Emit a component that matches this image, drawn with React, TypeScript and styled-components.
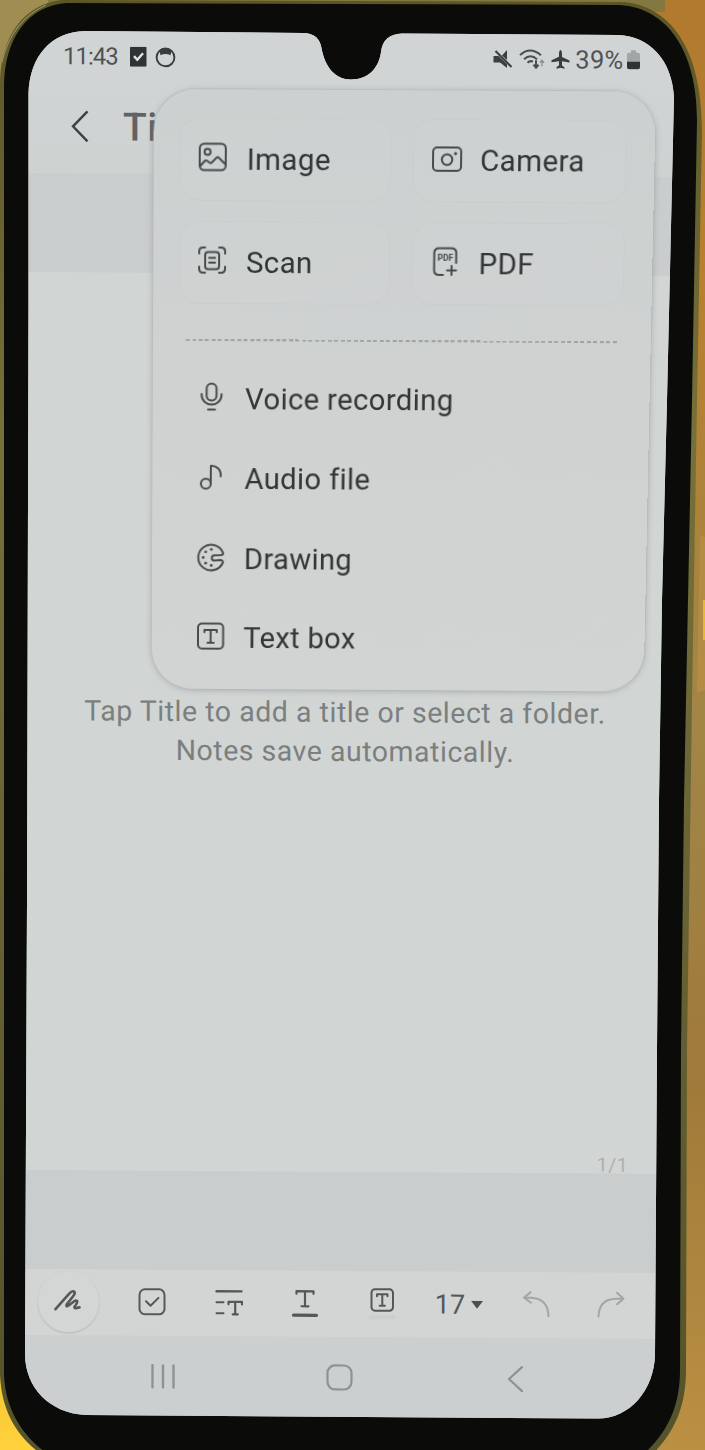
import React from "react";
import styled, { createGlobalStyle } from "styled-components";

const Global = createGlobalStyle`
  * { box-sizing: border-box; }
  body { margin: 0; background: #a5803c; font-family: Roboto, "Liberation Sans", sans-serif; }
`;

type Pt = [number, number];

/* Perspective matrix that carries a w × h box onto the four given corners (tl, tr, br, bl). */
function perspective(w: number, h: number, [p0, p1, p2, p3]: Pt[]) {
  const dx1 = p1[0] - p2[0];
  const dx2 = p3[0] - p2[0];
  const sx = p0[0] - p1[0] + p2[0] - p3[0];
  const dy1 = p1[1] - p2[1];
  const dy2 = p3[1] - p2[1];
  const sy = p0[1] - p1[1] + p2[1] - p3[1];
  const det = dx1 * dy2 - dx2 * dy1;
  const g = (sx * dy2 - dx2 * sy) / det;
  const k = (dx1 * sy - sx * dy1) / det;
  const a = p1[0] - p0[0] + g * p1[0];
  const b = p3[0] - p0[0] + k * p3[0];
  const d = p1[1] - p0[1] + g * p1[1];
  const e = p3[1] - p0[1] + k * p3[1];
  const m = [a / w, d / w, 0, g / w, b / h, e / h, 0, k / h, 0, 0, 1, 0, p0[0], p0[1], 0, 1];
  return `matrix3d(${m.map((n) => n.toFixed(8)).join(",")})`;
}

const Stage = styled.main`
  position: relative;
  width: 705px;
  height: 1450px;
  overflow: hidden;
`;

const DeviceArt = styled.svg`
  position: absolute;
  inset: 0;
`;

const Screen = styled.div`
  position: relative;
  width: 705px;
  height: 1450px;
  padding-left: 24px;
  background: #ced2d1;
  clip-path: path("M85 31 L303 33 C315 33.3 320 39 321.5 48 C325 67 335 79.5 351 79.5 C369 79.5 379 67 381 52 C382.5 40 389 34 402 33.5 L618 35 C650 36.5 672 60 674 97 L667 400 L662 600 L659 800 L657 1050 L655 1355 C654 1390 630 1418.5 598 1418.5 L85 1415 C50 1413 25.5 1388 25 1355 L27 900 L28.5 300 L28.5 93 C30 57 50 32 85 31 Z");
`;

const Column = styled.div`
  width: 656px;
  display: flex;
  flex-direction: column;
  transform: skewY(0.36deg);
  transform-origin: 0 0;
`;

const StatusBar = styled.div`
  height: 80px;
  padding: 32px 40px 0 39px;
  display: flex;
  justify-content: space-between;
  align-items: center;
  background: #d0d4d5;
  color: #505354;
  font-size: 24px;
`;

const StatusGroup = styled.div<{ $gap: number }>`
  display: flex;
  align-items: center;
  gap: ${(p) => p.$gap}px;
  height: 28px;
`;

const Clock = styled.span`
  letter-spacing: -1px;
  margin-right: 4px;
`;

const Percent = styled.span`
  font-size: 25.5px;
  letter-spacing: 0.3px;
  margin-right: -2px;
`;

const Header = styled.header`
  height: 93px;
  padding: 0 0 0 45px;
  display: flex;
  align-items: center;
  gap: 34px;
  background: linear-gradient(#d0d4d5, #ced2d1);
`;

const Title = styled.h1`
  margin: 0;
  font-size: 39px;
  font-weight: 500;
  letter-spacing: 0.6px;
  color: #606264;
`;

const Band = styled.div<{ $h: number }>`
  height: ${(p) => p.$h}px;
  background: #cacdcd;
`;

const Page = styled.section`
  height: 898px;
  padding: 419px 29px 0 0;
  display: flex;
  flex-direction: column;
  background: #d1d5d4;
`;

const Hint = styled.p`
  margin: 0 0 0 14px;
  width: 614px;
  font-size: 28.5px;
  line-height: 39px;
  letter-spacing: 0.52px;
  text-align: center;
  white-space: pre-line;
  color: #7c7f7f;
`;

const PageCount = styled.span`
  margin: auto 23px -4px auto;
  font-size: 19.5px;
  line-height: 24px;
  letter-spacing: 0.4px;
  color: #adb0b0;
`;

const Toolbar = styled.nav`
  height: 66px;
  display: grid;
  grid-template-columns: 88px 80px 74px 78px 76px 78px 76px 74px;
  align-items: center;
  justify-items: center;
  padding-bottom: 2px;
  background: #d2d5d4;
  color: #555858;
`;

const PenButton = styled.div`
  width: 61px;
  height: 61px;
  border-radius: 50%;
  display: grid;
  place-items: center;
  background: #d4d6d6;
  box-shadow: 0 1px 2px rgba(110, 115, 115, 0.3);
`;

const FontSize = styled.div`
  display: flex;
  align-items: center;
  gap: 6px;
  font-size: 27px;
  padding-top: 2px;
`;

const SystemNav = styled.nav`
  height: 110px;
  padding: 0 0 29px 126px;
  display: flex;
  align-items: center;
  gap: 149.5px;
  background: #cccfcf;
  color: #8e9292;
`;

const MENU_W = 500;
const MENU_H = 600;
const menuPlane = perspective(MENU_W, MENU_H, [
  [154, 89],
  [656, 91.5],
  [643.5, 691.5],
  [151.5, 688.5],
]);

const Menu = styled.div`
  position: absolute;
  left: 0;
  top: 0;
  width: ${MENU_W}px;
  height: ${MENU_H}px;
  padding: 28px 27px 0 26px;
  border-radius: 42px;
  background: linear-gradient(#ccd0d0, #cfd2d1 50%, #d2d4d3);
  box-shadow: 0 0 0 1px rgba(180, 185, 185, 0.45), 0 1px 6px rgba(100, 106, 108, 0.4);
  transform: ${menuPlane};
  transform-origin: 0 0;
`;

const TileGrid = styled.div`
  display: grid;
  grid-template-columns: 211px 213px;
  grid-auto-rows: 82px;
  gap: 20px 22px;
`;

const Tile = styled.div`
  display: flex;
  align-items: center;
  gap: 18px;
  padding-left: 18px;
  border-radius: 20px;
  border: 1px solid rgba(190, 194, 194, 0.28);
  background: rgba(209, 212, 211, 0.35);
`;

const Label = styled.span`
  font-size: 29.5px;
  letter-spacing: 0.35px;
  color: #333636;
`;

const Divider = styled.div`
  height: 2px;
  margin: 35px 6px 17.5px 7px;
  background: repeating-linear-gradient(90deg, #a1a5a5 0 4px, transparent 4px 6.5px);
`;

const Row = styled.div`
  height: 80.5px;
  padding-left: 19px;
  display: flex;
  align-items: center;
  gap: 18px;
`;

function Glyph({ w = 30, h = 30, sw = 2, children }: { w?: number; h?: number; sw?: number; children: React.ReactNode }) {
  return (
    <svg width={w} height={h} viewBox={`0 0 ${w} ${h}`} fill="none" stroke="currentColor" strokeWidth={sw} strokeLinecap="round" strokeLinejoin="round">
      {children}
    </svg>
  );
}

const MenuIcon = styled.span`
  display: flex;
  margin-top: -4px;
  color: #484b4b;
`;

const ImageIcon = () => (
  <Glyph>
    <rect x="1" y="1.5" width="26" height="26" rx="4.5" />
    <circle cx="8.8" cy="9.5" r="3" />
    <path d="M1.5 23.5 L5.5 19 Q7 17.2 9 18.8 L11 20.3 Q12 21 13 20 L17.5 15.5 Q19 14 20.5 15.7 L26.5 21.5" />
  </Glyph>
);
const CameraIcon = () => (
  <Glyph>
    <rect x="1" y="4" width="28" height="23" rx="4" />
    <circle cx="15" cy="16" r="5.2" />
    <circle cx="23.3" cy="10" r="1.2" fill="currentColor" strokeWidth="0.8" />
  </Glyph>
);
const ScanIcon = () => (
  <Glyph>
    <path d="M1 8 V6 Q1 2 5 2 H7 M21 2 H23 Q27 2 27 6 V8 M27 21 V23 Q27 27 23 27 H21 M7 27 H5 Q1 27 1 23 V21" />
    <rect x="7" y="6.5" width="14" height="17" rx="3" />
    <path d="M11 12.3 H17 M11 17 H17" />
  </Glyph>
);
const PdfMark = styled.text`
  font-size: 8.5px;
  font-weight: 700;
  fill: currentColor;
  stroke: none;
`;
const PdfIcon = () => (
  <Glyph>
    <path d="M12.5 28 H8.5 Q3.5 28 3.5 23 V6 Q3.5 1.5 8.5 1.5 H20.5 Q25.5 1.5 25.5 6 V16" />
    <path d="M21 19 V28 M16.5 23.5 H25.5" />
    <PdfMark x="6.8" y="14" textLength="15.5">PDF</PdfMark>
  </Glyph>
);
const MicIcon = () => (
  <Glyph>
    <rect x="9.3" y="1.5" width="10" height="17" rx="5" />
    <path d="M4.3 12 V13 A10 9.5 0 0 0 24.3 13 V12 M10.8 27.5 H17.8" />
  </Glyph>
);
const NoteIcon = () => (
  <Glyph>
    <circle cx="9" cy="22" r="5" />
    <path d="M14 22 V4 C19.5 3.5 24.5 7.5 24 14.5" />
  </Glyph>
);
const PaletteIcon = () => (
  <Glyph>
    <path d="M26.8 10.5 A13 13 0 1 0 26.8 20.5 Q27 18 24 18 L18.5 18.5 Q15.5 18.5 15.5 15.9 Q15.5 13.3 18.5 13.2 L24.5 13 Q27.5 12.8 26.8 10.5 Z" />
    <g fill="currentColor" stroke="none">
      <circle cx="15" cy="7.3" r="1.4" />
      <circle cx="9.3" cy="9.8" r="1.4" />
      <circle cx="6.8" cy="15.5" r="1.4" />
      <circle cx="9.3" cy="21.2" r="1.4" />
      <circle cx="15" cy="23.5" r="1.4" />
    </g>
  </Glyph>
);
const TextBoxIcon = () => (
  <Glyph>
    <rect x="2" y="2.5" width="25.5" height="25.5" rx="4" />
    <path d="M8.5 11.3 V9 H21 V11.3 M14.8 9 V22 M11.6 22 H18" />
  </Glyph>
);

const tiles = [
  { label: "Image", icon: <ImageIcon /> },
  { label: "Camera", icon: <CameraIcon /> },
  { label: "Scan", icon: <ScanIcon /> },
  { label: "PDF", icon: <PdfIcon /> },
];
const rows = [
  { label: "Voice recording", icon: <MicIcon /> },
  { label: "Audio file", icon: <NoteIcon /> },
  { label: "Drawing", icon: <PaletteIcon /> },
  { label: "Text box", icon: <TextBoxIcon /> },
];

function Device() {
  return (
    <DeviceArt width="705" height="1450" viewBox="0 0 705 1450">
      <defs>
        <linearGradient id="wallL" x1="0" y1="0" x2="0" y2="1">
          <stop offset="0" stopColor="#a18e52" />
          <stop offset="0.5" stopColor="#8a7a3c" />
          <stop offset="0.9" stopColor="#f3bd2c" />
          <stop offset="1" stopColor="#ffd23c" />
        </linearGradient>
        <linearGradient id="wallR" x1="0" y1="0" x2="0" y2="1">
          <stop offset="0" stopColor="#b27a2f" />
          <stop offset="0.2" stopColor="#b8802f" />
          <stop offset="0.5" stopColor="#a18647" />
          <stop offset="0.75" stopColor="#a07a3a" />
          <stop offset="1" stopColor="#bb9043" />
        </linearGradient>
        <linearGradient id="rim" x1="0" y1="0" x2="0" y2="1">
          <stop offset="0" stopColor="#5c5526" />
          <stop offset="0.3" stopColor="#76703a" />
          <stop offset="1" stopColor="#54522b" />
        </linearGradient>
      </defs>
      <rect width="352" height="1450" fill="url(#wallL)" />
      <rect x="352" width="353" height="1450" fill="url(#wallR)" />
      <rect x="48" width="617" height="12" fill="#827840" />
      <path d="M62 0 C25 4 0 35 0 85 L0 1375 C2 1420 25 1448 60 1465 L640 1465 C672 1440 686 1410 686 1370 L687 1050 L692 700 L697 400 L702 130 C702 55 675 8 625 2 Z" fill="url(#rim)" />
      <path d="M66 3 C28 6 4 38 4 88 L4 1375 C6 1418 30 1445 64 1465 L630 1465 C665 1440 680 1410 680 1370 L681 1050 L684 800 L688 600 L692 400 L697 120 C697 52 668 8 620 5 Z" fill="#0b0c09" />
      <path d="M2 62 C8 36 22 16 46 5" fill="none" stroke="#8c9068" strokeWidth="1.2" />
      <path d="M700 535 L705 537 V690 L697 692 Z" fill="#b48c45" />
      <path d="M703 600 H705 V640 H703 Z" fill="#e7b92c" />
    </DeviceArt>
  );
}

export default function App() {
  return (
    <Stage>
      <Global />
      <Device />
      <Screen>
        <Column>
          <StatusBar>
            <StatusGroup $gap={8}>
              <Clock>11:43</Clock>
              <svg width="17" height="20" viewBox="0 0 17 20">
                <rect width="16.5" height="20" rx="1" fill="#303333" />
                <path d="M4 9.5 L7.3 13 L13 6.5" fill="none" stroke="#e2e5e5" strokeWidth="2.4" />
              </svg>
              <svg width="21" height="21" viewBox="0 0 21 21">
                <circle cx="10.5" cy="10.5" r="8.9" fill="none" stroke="#3a3d3d" strokeWidth="1.9" />
                <path d="M4.5 3.5 Q10.5 -0.5 16.5 3.5 L15.5 8.3 Q10.5 6 5.5 8.3 Z" fill="#3a3d3d" />
              </svg>
            </StatusGroup>
            <StatusGroup $gap={5.5}>
              <svg width="20" height="20" viewBox="0 0 20 20" fill="#3c3f3f">
                <path d="M0.5 7 H5.5 L14 15 V19 L7 13.5 H0.5 Z M9 6.5 L14 1 V11 Z" />
                <path d="M2.5 2 L18.5 18" stroke="#3c3f3f" strokeWidth="2.2" />
              </svg>
              <svg width="27" height="22" viewBox="0 0 27 22" fill="none" stroke="#4b4e4e" strokeWidth="2">
                <path d="M2 7 Q12 -2.5 23 7 M6 11 Q12.5 5 19 11 M9.5 14.5 Q12 12 15 13.5" />
                <path d="M18 12 V19 M15.5 16.5 L18 19.5 L20.5 16.5" />
                <path d="M24 18 V12 M22 14.5 L24 12 L26 14.5" strokeWidth="1.2" stroke="#888" />
              </svg>
              <svg width="19" height="20" viewBox="0 0 19 20" fill="#3a3d3d">
                <path d="M9.5 0.5 Q11 1.5 11 4 V7.5 L18.5 11 V13 L11 11.8 V16 L13.5 18 V19.3 L9.5 18.5 L5.5 19.3 V18 L8 16 V11.8 L0.5 13 V11 L8 7.5 V4 Q8 1.5 9.5 0.5 Z" />
              </svg>
              <Percent>39%</Percent>
              <svg width="13" height="20" viewBox="0 0 13 20">
                <path d="M4 0.5 H9 V3 H11 Q13 3 13 5 V12.5 H0 V5 Q0 3 2 3 H4 Z" fill="#a3a6a6" />
                <path d="M0 12 H13 V17.5 Q13 19.5 11 19.5 H2 Q0 19.5 0 17.5 Z" fill="#303333" />
              </svg>
            </StatusGroup>
          </StatusBar>
          <Header>
            <svg width="20" height="34" viewBox="0 0 20 34" fill="none" stroke="#3e4142" strokeWidth="2.4">
              <path d="M18.5 1 L4 16 L18.5 31" />
            </svg>
            <Title>Title</Title>
          </Header>
          <Band $h={99} />
          <Page>
            <Hint>{"Tap Title to add a title or select a folder.\nNotes save automatically."}</Hint>
            <PageCount>1/1</PageCount>
          </Page>
          <Band $h={99} />
          <Toolbar>
            <PenButton>
              <Glyph w={28} h={24} sw={2.6}>
                <path d="M1.5 20 L15 4.5 Q18 1.2 20 2.2 Q22 3.7 18.5 7.7 L12.8 15 Q11.5 18.5 15 16 L19.5 12.5 Q22.5 10 23.3 12 Q23 14.5 20.5 17.5 Q20 20 25.5 18" />
              </Glyph>
            </PenButton>
            <Glyph w={28} h={28}>
              <rect x="1.5" y="1.5" width="25" height="25" rx="5.5" />
              <path d="M8 13.5 L12.5 18 L20.5 10" />
            </Glyph>
            <Glyph w={28} h={28}>
              <path d="M1.5 3 H26.5" strokeWidth="2.4" />
              <path d="M1.5 14 H8.5 M1.5 25 H8.5" />
              <path d="M13.5 16 V13.5 H27 V16 M20.2 13.5 V26 M17.7 26 H22.8" strokeWidth="2.2" />
            </Glyph>
            <Glyph w={28} h={30} sw={2.2}>
              <path d="M5.5 6 V3.5 H22.5 V6 M14 3.5 V18.5 M10.5 18.5 H17.5" />
              <path d="M2.5 27.5 H25.5" strokeWidth="3.2" />
            </Glyph>
            <Glyph w={28} h={34}>
              <rect x="3.5" y="3" width="21.5" height="21.5" rx="3.5" />
              <path d="M9 10 V8 H19.5 V10 M14.3 8 V19.5 M11.7 19.5 H16.9" />
              <path d="M1 31 H27" stroke="#cbcecd" strokeWidth="4" strokeLinecap="butt" />
            </Glyph>
            <FontSize>
              17
              <svg width="12" height="8" viewBox="0 0 12 8">
                <path d="M0 0 H12 L6 8 Z" fill="#4c4f4f" />
              </svg>
            </FontSize>
            <Glyph w={28} h={28}>
              <g stroke="#a3a6a6">
                <path d="M8.5 2 L2 7.5 L9 12.5 M2.5 7.5 H9 Q26 8 26.5 26" />
              </g>
            </Glyph>
            <Glyph w={28} h={28}>
              <g stroke="#a3a6a6">
                <path d="M20 2 L26.5 8 L20 13.5 M26 8 H19 Q2 8.5 1.5 26" />
              </g>
            </Glyph>
          </Toolbar>
          <SystemNav>
            <Glyph w={26} h={28} sw={2.4}>
              <path d="M2.5 2.5 V24.5 M13 2.5 V24.5 M23.5 2.5 V24.5" />
            </Glyph>
            <Glyph w={27} h={27} sw={2.2}>
              <rect x="1.5" y="1.5" width="24" height="24" rx="7.5" />
            </Glyph>
            <Glyph w={26} h={28} sw={2.2}>
              <path d="M20 2 L7 14 L20 26" />
            </Glyph>
          </SystemNav>
        </Column>
        <Menu>
          <TileGrid>
            {tiles.map((t) => (
              <Tile key={t.label}>
                <MenuIcon>{t.icon}</MenuIcon>
                <Label>{t.label}</Label>
              </Tile>
            ))}
          </TileGrid>
          <Divider />
          {rows.map((r) => (
            <Row key={r.label}>
              <MenuIcon>{r.icon}</MenuIcon>
              <Label>{r.label}</Label>
            </Row>
          ))}
        </Menu>
      </Screen>
    </Stage>
  );
}
